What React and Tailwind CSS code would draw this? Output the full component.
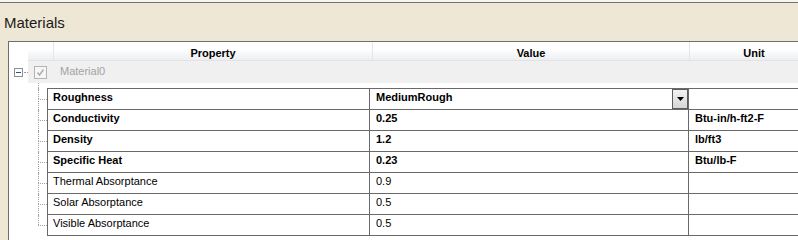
import React from "react";

const rows = [
  { p: "Roughness", v: "MediumRough", u: "", bold: true, dd: true },
  { p: "Conductivity", v: "0.25", u: "Btu-in/h-ft2-F", bold: true },
  { p: "Density", v: "1.2", u: "lb/ft3", bold: true },
  { p: "Specific Heat", v: "0.23", u: "Btu/lb-F", bold: true },
  { p: "Thermal Absorptance", v: "0.9", u: "", bold: false },
  { p: "Solar Absorptance", v: "0.5", u: "", bold: false },
  { p: "Visible Absorptance", v: "0.5", u: "", bold: false },
];

export default function App() {
  return (
    <div className="w-[798px] h-[240px] overflow-hidden bg-[#efe7d5] font-['Liberation_Sans',Arial,sans-serif] text-[11px] text-black">
      <div className="h-[2px] bg-[#f8f6f1]" />
      <div className="h-[1px] bg-[#727272]" />
      <div className="h-[38px] pt-[11px] pl-[4px] text-[15px] leading-[18px] text-[#1a1a1a]">
        Materials
      </div>
      <div className="ml-[8px] w-[860px] h-[200px] border-l border-t border-[#6e6e6e] bg-white">
        {/* header */}
        <div className="flex ml-[19px] h-[19px] border-b border-[#e2e3e5] bg-linear-to-b from-white from-40% to-[#eceef1]">
          <div className="w-[26px] shrink-0 border-r border-[#e4e5e7]" />
          <div className="w-[319px] shrink-0 border-r border-[#e4e5e7] text-center font-bold pt-[4px] leading-[14px]">
            Property
          </div>
          <div className="w-[317px] shrink-0 border-r border-[#e4e5e7] text-center font-bold pt-[4px] leading-[14px]">
            Value
          </div>
          <div className="w-[128px] shrink-0 text-center font-bold pt-[4px] leading-[14px]">
            Unit
          </div>
        </div>
        {/* Material0 row */}
        <div className="flex h-[22px]">
          <div className="w-[19px] shrink-0 flex items-center">
            <div className="ml-[5px] w-[9px] h-[9px] border border-[#8e9090] bg-white flex items-center justify-center">
              <div className="w-[5px] h-[1px] bg-[#2d4f9e]" />
            </div>
            <div className="ml-[1px] w-[4px] h-0 border-t border-dotted border-[#9a9a9a]" />
          </div>
          <div className="flex-1 bg-[#f0f0f0] flex items-center">
            <div className="ml-[6px] w-[13px] h-[13px] border border-[#b3b3b3] bg-[#f6f6f6] flex items-center justify-center">
              <svg width="11" height="11" viewBox="0 0 11 11">
                <path d="M2.5 5.5 L4.5 8 L8.5 2.5" stroke="#ababab" strokeWidth="1.4" fill="none" />
              </svg>
            </div>
            <div className="ml-[13px] text-[#a3a3a3] leading-[18px] pb-[2px]">Material0</div>
          </div>
        </div>
        {/* gap */}
        <div className="flex h-[5px]">
          <div className="ml-[29px] h-full border-l border-dotted border-[#a0a0a0]" />
        </div>
        {/* table top border */}
        <div className="flex h-[1px]">
          <div className="w-[38px] shrink-0">
            <div className="ml-[29px] h-full border-l border-dotted border-[#a0a0a0]" />
          </div>
          <div className="flex-1 bg-[#696969]" />
        </div>
        {rows.map((r, i) => {
          const last = i === rows.length - 1;
          return (
            <div key={r.p} className="flex h-[21px]">
              <div className="w-[38px] shrink-0 flex flex-col">
                <div className="ml-[29px] h-[10px] border-l border-dotted border-[#a0a0a0]" />
                <div
                  className={
                    last
                      ? "ml-[29px] h-[11px] border-t border-dotted border-[#a0a0a0]"
                      : "ml-[29px] h-[11px] border-t border-l border-dotted border-[#a0a0a0]"
                  }
                />
              </div>
              <div className={r.bold ? "flex flex-1 border-l border-b border-[#696969] font-bold" : "flex flex-1 border-l border-b border-[#696969]"}>
                <div className="w-[322px] shrink-0 border-r border-[#696969] pl-[5px] leading-[16px]">
                  {r.p}
                </div>
                <div className="w-[319px] shrink-0 border-r border-[#696969] flex">
                  <div className="flex-1 pl-[6px] leading-[16px]">{r.v}</div>
                  {r.dd && (
                    <div className="w-[16px] h-[20px] border border-[#5c5c5c] bg-linear-to-b from-[#f2f2f2] to-[#d6d6d6] flex items-center justify-center">
                      <svg width="7" height="4" viewBox="0 0 7 4">
                        <polygon points="0,0 7,0 3.5,4" fill="#000" />
                      </svg>
                    </div>
                  )}
                </div>
                <div className="flex-1 pl-[6px] leading-[16px]">{r.u}</div>
              </div>
            </div>
          );
        })}
      </div>
    </div>
  );
}
